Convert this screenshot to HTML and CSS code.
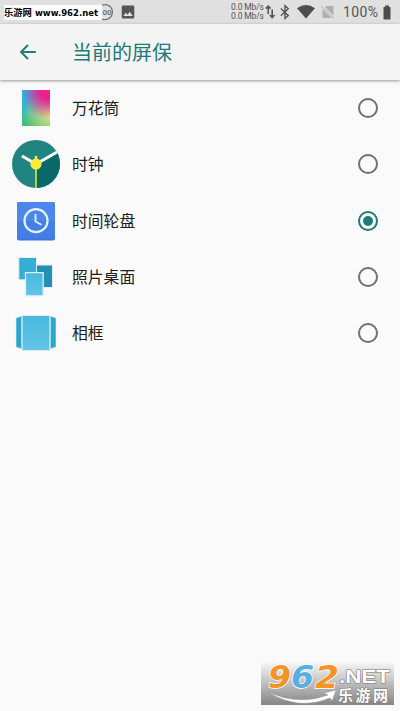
FILE: index.html
```html
<!DOCTYPE html>
<html lang="zh-CN">
<head>
<meta charset="utf-8">
<title>当前的屏保</title>
<link rel="stylesheet" href="styles.css">
</head>
<body>
<div class="screen">
  <header class="status">
    <div class="source"><span>乐游网</span><svg width="64" height="15" viewBox="0 0 64 15"><text x="0" y="11" textLength="63" lengthAdjust="spacingAndGlyphs">www.962.net</text></svg></div>
    <svg class="badge" width="12" height="18" viewBox="0 0 12 18"><path d="M0 2.200A7.500 7.500 0 1 1 0 16" fill="none" stroke="#777" stroke-width="1.300"/><text x=".5" y="12" class="badge-text">00</text></svg>
    <svg class="image-icon" width="14" height="14" viewBox="0 0 14 14"><path fill="#555" fill-rule="evenodd" d="M2 .5h10q1.300 0 1.300 1.300v10.400q0 1.300-1.300 1.300H2Q.7 13.500.7 12.200V1.800Q.7.500 2 .5ZM2.300 11h9.500L8.800 6.700 6.500 9.700 4.800 7.700Z"/></svg>
    <div class="rates"><span>0.0 Mb/s</span><span>0.0 Mb/s</span></div>
    <svg class="system" width="75" height="24" viewBox="265 0 75 24">
      <g fill="none" stroke="#555" stroke-width="1.600"><path d="M268.200 14V6.500M265.800 8.600l2.400-2.500 2.400 2.500M272.200 9.500V17M269.800 15l2.400 2.500 2.400-2.500"/><path stroke-width="1.400" d="m280.800 8.500 7.500 7-3.300 3V5.700l3.300 3-7.500 7"/></g>
      <path fill="#4d4d4d" d="M297 8.200Q306 1.800 315 8.200L306 18.500Z"/>
      <path fill="#b0b0b0" d="M326.500 6H333.500V15.800L325 7.300ZM322.500 9 331.500 18H322.500Z"/>
      <path d="m321.500 6.200 12.300 12.300" stroke="#a5a5a5" stroke-width="1"/>
    </svg>
    <span class="percent">100%</span>
    <svg class="battery" width="10" height="15" viewBox="0 0 10 15"><path fill="#4d4d4d" d="M3 .5h4v1.500h1.500v12.500h-7V2H3Z"/></svg>
  </header>
  <div class="appbar">
    <svg class="back" width="18" height="18" viewBox="0 0 18 18"><path d="M16.800 9H2M9 2 2 9l7 7" fill="none" stroke="#207a75" stroke-width="1.900"/></svg>
    <h1>当前的屏保</h1>
  </div>
  <main class="list">
    <div class="row"><span class="icon"><span class="colors"></span></span><span class="name">万花筒</span><span class="radio"></span></div>
    <div class="row"><svg class="icon" viewBox="0 0 48 48"><defs><clipPath id="dial"><circle cx="24" cy="24" r="24"/></clipPath></defs><g clip-path="url(#dial)"><path fill="#218480" d="M0 0h48v48H0z"/><path fill="#09686a" d="M24 24 48 10v38H24Z"/><path d="m10 16 14 8 23-13" fill="none" stroke="#fff" stroke-width="3"/><path d="M24 17v31" stroke="#d8df45" stroke-width="1.700"/><path d="M24 16v6" stroke="#f7eb3b" stroke-width="2.500"/><circle cx="24" cy="24" r="5.600" fill="#f7eb3b"/></g></svg><span class="name">时钟</span><span class="radio"></span></div>
    <div class="row"><svg class="icon" viewBox="0 0 48 48"><rect x="5" y="5" width="38" height="38.500" rx="2" fill="#3e77da"/><path fill="#4e87ec" d="M7 5h34q2 0 2 2v17H5V7q0-2 2-2Z"/><path fill="#437fe4" d="M5 24h38v17.500H5z"/><g fill="none" stroke="#e5f4ff"><circle cx="24" cy="23.700" r="11.500" stroke-width="2.200"/><path d="M23.500 17v7.500l6 3.300" stroke-width="1.800"/></g></svg><span class="name">时间轮盘</span><span class="radio on"></span></div>
    <div class="row"><svg class="icon" viewBox="0 0 48 48"><defs><linearGradient id="sky" x2="0" y2="1"><stop stop-color="#48b7dc"/><stop offset="1" stop-color="#62c6e8"/></linearGradient></defs><g stroke="#e1eef2" stroke-width="1"><path fill="#36add5" d="M6.800 4.500h17.700v22.300H6.800z"/><path fill="#248fb4" d="M24.500 12h16v22.500h-16z"/><path fill="url(#sky)" d="M13.500 19.700h17.700v23.100H13.500z" stroke-width="1.300"/></g></svg><span class="name">照片桌面</span><span class="radio"></span></div>
    <div class="row"><svg class="icon" viewBox="0 0 48 48"><path fill="#2da5cc" stroke="#dcecf1" stroke-width=".6" d="m4 9 6-2v33l-6-2zM44 9l-6-2v33l6-2z"/><path fill="url(#sky)" stroke="#dff0f5" stroke-width="1.200" d="M10 6.500h28v35H10z"/></svg><span class="name">相框</span><span class="radio"></span></div>
  </main>
  <svg class="watermark" width="134" height="56" viewBox="0 -12 134 56">
    <defs><linearGradient id="shade" x2="0" y2="1"><stop stop-color="#f7f7f7"/><stop offset="1" stop-color="#858585"/></linearGradient></defs>
    <path fill="url(#shade)" d="M0 0h133v43H0z"/>
    <g class="digits"><text x="7" y="26" textLength="23" lengthAdjust="spacingAndGlyphs" fill="#f69328">9</text><text x="30" y="26" textLength="23" lengthAdjust="spacingAndGlyphs" fill="#5aaee4">6</text><text x="54" y="26" textLength="24" lengthAdjust="spacingAndGlyphs" fill="#f69328">2</text></g>
    <path d="M7 30Q37 44 67 33l-4-2 12-3-4 11-2-3Q37 49 7 30Z" fill="#fff" stroke="#999" stroke-width=".5"/>
    <text class="net" x="78" y="20.500" textLength="51" lengthAdjust="spacingAndGlyphs">.NET</text>
    <text class="brand" x="77" y="38.500" textLength="50">乐游网</text>
  </svg>
</div>
</body>
</html>
```
FILE: styles.css
```css
* { box-sizing: border-box; }
body { margin: 0; font-family: Roboto, "Noto Sans CJK SC", sans-serif; }
.screen { position: relative; width: 400px; height: 711px; overflow: hidden; background: #fafafa; }
.status { display: flex; align-items: center; height: 24px; background: #e0e0e0; color: #555; }
.source { display: flex; gap: 3px; width: 98px; height: 15px; margin: 1px 0 0 4px; background: #fff; color: #000; font: bold 9.300px/15px "DejaVu Sans", "Noto Sans CJK SC", sans-serif; white-space: nowrap; }
.source, .badge, .image-icon, .rates, .system, .percent, .battery { flex: none; }
.source svg { overflow: visible; }
.badge-text { font: bold 8px Roboto, sans-serif; fill: #777; }
.image-icon { margin-left: 7px; }
.rates { display: flex; flex-direction: column; width: 34px; margin-left: 96px; font-size: 8.5px; line-height: 9px; white-space: nowrap; letter-spacing: -.15px; }
.percent { width: 38px; margin-left: 3px; font-size: 14px; line-height: 24px; letter-spacing: .4px; }
.battery { margin-left: 1px; }
.appbar { position: relative; display: flex; align-items: center; height: 56px; padding-left: 19px; background: #f4f4f4; box-shadow: 0 1px 3px rgba(0, 0, 0, .4); }
h1 { margin: 0 0 0 35px; padding-top: 2px; color: #207a75; font-size: 20px; line-height: 30px; font-weight: 400; }
.list { display: grid; grid-auto-rows: 56.25px; }
.row { display: flex; align-items: center; padding: 0 22px 0 12px; }
.icon { display: flex; align-items: center; justify-content: center; flex: none; width: 48px; height: 48px; }
.colors { width: 28px; height: 36px; background: radial-gradient(circle at 90% 8%, #ed208d 0 15%, rgba(237, 32, 141, 0) 62%), radial-gradient(circle at 100% 68%, #e8e184, rgba(227, 228, 127, 0) 70%), linear-gradient(175deg, #28b8e8 25%, #43bda2 65%, #42bd68); }
.name { flex: 1; margin-left: 12px; padding-top: 2px; color: #202020; font-size: 15.800px; line-height: 24px; }
.radio { display: flex; align-items: center; justify-content: center; width: 20px; height: 20px; border: 2px solid #707070; border-radius: 50%; }
.on { border-color: #207a75; }
.on::after { content: ""; width: 10px; height: 10px; border-radius: 50%; background: #207a75; }
.watermark { position: absolute; left: 261px; top: 650px; }
.digits { font: italic bold 32px "DejaVu Sans", sans-serif; stroke: #fff; stroke-width: 1.5px; paint-order: stroke; }
.net { font: bold 18px "Liberation Sans", sans-serif; fill: #fff; stroke: #777; stroke-width: 1px; paint-order: stroke; }
.brand { font: bold 15px "Noto Sans CJK SC", sans-serif; fill: #fff; stroke: #777; stroke-width: 1px; paint-order: stroke; }
```
